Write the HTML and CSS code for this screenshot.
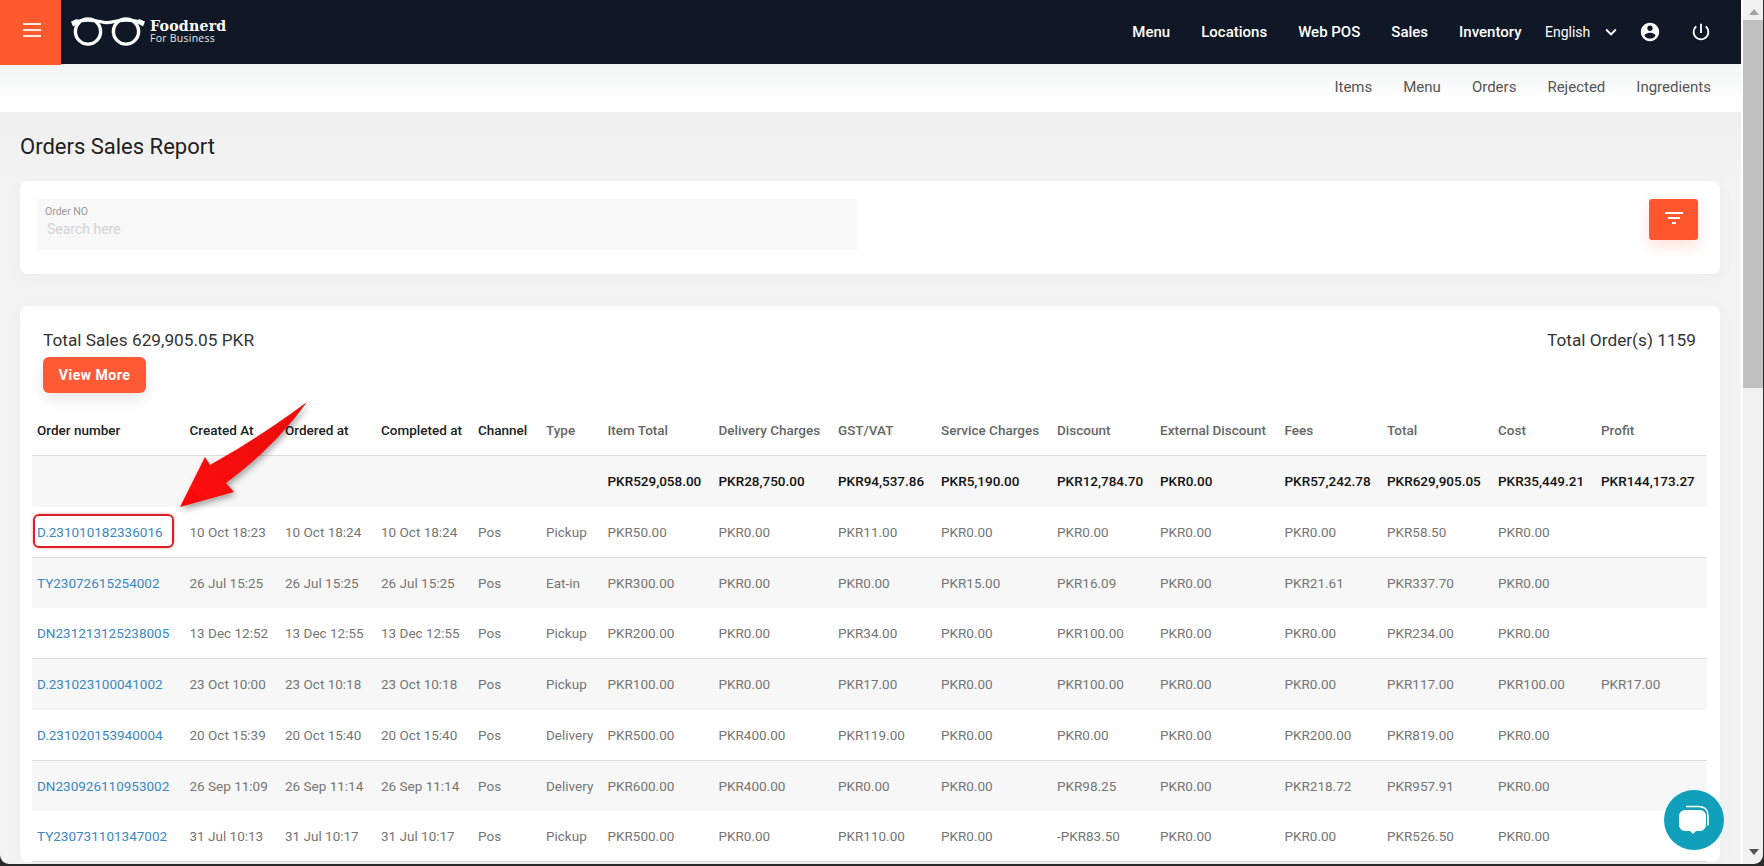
FILE: index.html
```html
<!DOCTYPE html>
<html lang="en">
<head>
<meta charset="utf-8">
<title>Orders Sales Report</title>
<link rel="stylesheet" href="styles.css">
</head>
<body>
<div class="window">
  <div class="page">
    <header class="topbar">
      <button class="burger" aria-label="Menu"><span></span><span></span><span></span></button>
      <div class="logo">
        <svg class="glasses" viewBox="0 0 76 30" width="76" height="30">
          <g fill="none" stroke="#fff" stroke-width="3.4">
            <circle cx="18" cy="15.5" r="12.6"/>
            <circle cx="56" cy="15.5" r="12.6"/>
            <path d="M5 5.8q13-3.4 26 0q6 1.6 12 0q13-3.4 27 0" stroke-width="3.2"/>
          </g>
          <path fill="#fff" d="M1 5.5l6-2.5 2 4-6 3.5zM75 5.5l-6-2.5-2 4 6 3.5z"/>
        </svg>
        <div class="brand">
          <div class="brand-name">Foodnerd</div>
          <div class="brand-sub">For Business</div>
        </div>
      </div>
      <nav class="mainnav">
        <a>Menu</a><a>Locations</a><a>Web POS</a><a>Sales</a><a>Inventory</a>
      </nav>
      <div class="lang">English
        <svg viewBox="0 0 24 24" width="22" height="22"><path fill="#fff" d="M16.59 8.59L12 13.17 7.41 8.59 6 10l6 6 6-6z"/></svg>
      </div>
      <svg class="icon-user" viewBox="0 0 24 24" width="22" height="22"><path fill="#fff" d="M12 2C6.48 2 2 6.48 2 12s4.48 10 10 10 10-4.48 10-10S17.52 2 12 2zm0 3c1.66 0 3 1.34 3 3s-1.34 3-3 3-3-1.34-3-3 1.34-3 3-3zm0 14.2c-2.5 0-4.71-1.28-6-3.22.03-1.99 4-3.08 6-3.08 1.99 0 5.97 1.09 6 3.08-1.29 1.94-3.5 3.22-6 3.22z"/></svg>
      <svg class="icon-power" viewBox="0 0 24 24" width="22" height="22"><path fill="#fff" d="M13 3h-2v10h2V3zm4.83 2.17l-1.42 1.42C17.99 7.86 19 9.81 19 12c0 3.87-3.13 7-7 7s-7-3.13-7-7c0-2.19 1.01-4.14 2.58-5.42L6.17 5.17C4.23 6.82 3 9.26 3 12c0 4.97 4.03 9 9 9s9-4.03 9-9c0-2.74-1.23-5.18-3.17-6.83z"/></svg>
    </header>
    <nav class="subnav">
      <a>Items</a><a>Menu</a><a>Orders</a><a>Rejected</a><a>Ingredients</a>
    </nav>
    <main class="content">
      <h1 class="title">Orders Sales Report</h1>
      <section class="card filter-card">
        <div class="search">
          <label class="search-label">Order NO</label>
          <div class="search-input">Search here</div>
        </div>
        <button class="filter-btn" aria-label="Filter"><svg viewBox="0 0 24 24" width="24" height="24"><path fill="#fff" d="M10 18h4v-2h-4v2zM3 6v2h18V6H3zm3 7h12v-2H6v2z"/></svg></button>
      </section>
      <section class="card table-card">
        <div class="summary">
          <div>
            <div class="summary-text">Total Sales 629,905.05 PKR</div>
            <button class="view-more">View More</button>
          </div>
          <div class="summary-text">Total Order(s) 1159</div>
        </div>
        <table class="orders">
          <colgroup>
            <col class="c1"><col class="c2"><col class="c3"><col class="c4"><col class="c5"><col class="c6"><col class="c7"><col class="c8"><col class="c9"><col class="c10"><col class="c11"><col class="c12"><col class="c13"><col class="c14"><col class="c15"><col class="c16">
          </colgroup>
          <thead>
            <tr>
              <th class="dark">Order number</th><th class="dark">Created At</th><th class="dark">Ordered at</th><th class="dark">Completed at</th><th class="dark">Channel</th><th>Type</th><th>Item Total</th><th>Delivery Charges</th><th>GST/VAT</th><th>Service Charges</th><th>Discount</th><th>External Discount</th><th>Fees</th><th>Total</th><th>Cost</th><th>Profit</th>
            </tr>
          </thead>
          <tbody>
            <tr class="totals">
              <td></td><td></td><td></td><td></td><td></td><td></td><td>PKR529,058.00</td><td>PKR28,750.00</td><td>PKR94,537.86</td><td>PKR5,190.00</td><td>PKR12,784.70</td><td>PKR0.00</td><td>PKR57,242.78</td><td>PKR629,905.05</td><td>PKR35,449.21</td><td>PKR144,173.27</td>
            </tr>
            <tr class="light">
              <td><a class="order-link">D.231010182336016</a></td><td>10 Oct 18:23</td><td>10 Oct 18:24</td><td>10 Oct 18:24</td><td>Pos</td><td>Pickup</td><td>PKR50.00</td><td>PKR0.00</td><td>PKR11.00</td><td>PKR0.00</td><td>PKR0.00</td><td>PKR0.00</td><td>PKR0.00</td><td>PKR58.50</td><td>PKR0.00</td><td></td>
            </tr>
            <tr class="shade">
              <td><a class="order-link">TY23072615254002</a></td><td>26 Jul 15:25</td><td>26 Jul 15:25</td><td>26 Jul 15:25</td><td>Pos</td><td>Eat-in</td><td>PKR300.00</td><td>PKR0.00</td><td>PKR0.00</td><td>PKR15.00</td><td>PKR16.09</td><td>PKR0.00</td><td>PKR21.61</td><td>PKR337.70</td><td>PKR0.00</td><td></td>
            </tr>
            <tr class="light">
              <td><a class="order-link">DN231213125238005</a></td><td>13 Dec 12:52</td><td>13 Dec 12:55</td><td>13 Dec 12:55</td><td>Pos</td><td>Pickup</td><td>PKR200.00</td><td>PKR0.00</td><td>PKR34.00</td><td>PKR0.00</td><td>PKR100.00</td><td>PKR0.00</td><td>PKR0.00</td><td>PKR234.00</td><td>PKR0.00</td><td></td>
            </tr>
            <tr class="shade">
              <td><a class="order-link">D.231023100041002</a></td><td>23 Oct 10:00</td><td>23 Oct 10:18</td><td>23 Oct 10:18</td><td>Pos</td><td>Pickup</td><td>PKR100.00</td><td>PKR0.00</td><td>PKR17.00</td><td>PKR0.00</td><td>PKR100.00</td><td>PKR0.00</td><td>PKR0.00</td><td>PKR117.00</td><td>PKR100.00</td><td>PKR17.00</td>
            </tr>
            <tr class="light">
              <td><a class="order-link">D.231020153940004</a></td><td>20 Oct 15:39</td><td>20 Oct 15:40</td><td>20 Oct 15:40</td><td>Pos</td><td>Delivery</td><td>PKR500.00</td><td>PKR400.00</td><td>PKR119.00</td><td>PKR0.00</td><td>PKR0.00</td><td>PKR0.00</td><td>PKR200.00</td><td>PKR819.00</td><td>PKR0.00</td><td></td>
            </tr>
            <tr class="shade">
              <td><a class="order-link">DN230926110953002</a></td><td>26 Sep 11:09</td><td>26 Sep 11:14</td><td>26 Sep 11:14</td><td>Pos</td><td>Delivery</td><td>PKR600.00</td><td>PKR400.00</td><td>PKR0.00</td><td>PKR0.00</td><td>PKR98.25</td><td>PKR0.00</td><td>PKR218.72</td><td>PKR957.91</td><td>PKR0.00</td><td></td>
            </tr>
            <tr class="light">
              <td><a class="order-link">TY230731101347002</a></td><td>31 Jul 10:13</td><td>31 Jul 10:17</td><td>31 Jul 10:17</td><td>Pos</td><td>Pickup</td><td>PKR500.00</td><td>PKR0.00</td><td>PKR110.00</td><td>PKR0.00</td><td>-PKR83.50</td><td>PKR0.00</td><td>PKR0.00</td><td>PKR526.50</td><td>PKR0.00</td><td></td>
            </tr>
          </tbody>
        </table>
      </section>
    </main>
  </div>
  <aside class="scrollbar">
    <span class="arrow-up"></span>
    <div class="thumb"></div>
    <span class="arrow-down"></span>
  </aside>
  <div class="ring"></div>
  <svg class="pointer" viewBox="0 0 140 120" width="140" height="120">
    <defs>
      <linearGradient id="redfill" x1="1" y1="0" x2="0" y2="1">
        <stop offset="0" stop-color="#e80d0d"/>
        <stop offset="1" stop-color="#ff0606"/>
      </linearGradient>
      <filter id="soft" x="-20%" y="-20%" width="150%" height="150%"><feDropShadow dx="2" dy="3" stdDeviation="3" flood-color="#000" flood-opacity=".35"/></filter>
    </defs>
    <path fill="url(#redfill)" filter="url(#soft)" d="M5 110 L30 60 L35 68 Q85 40 132 5 Q100 50 51 86 L59 95 Z"/>
  </svg>
  <button class="chat" aria-label="Chat">
    <svg viewBox="0 0 36 36" width="36" height="36">
      <path fill="none" stroke="#fff" stroke-width="1.6" d="M10 4.5h12c6 0 10 3 10 9v10"/>
      <path fill="#fff" d="M9 8h15a6 6 0 0 1 6 6v9a6 6 0 0 1-6 6h-4l-3 3-3-3H9a6 6 0 0 1-6-6v-9a6 6 0 0 1 6-6z"/>
    </svg>
  </button>
  <div class="frame"></div>
</div>
</body>
</html>
```
FILE: styles.css
```css
* { box-sizing: border-box; }
html, body { margin: 0; height: 100%; overflow: hidden; }
body { font-family: Roboto, "Liberation Sans", sans-serif; background: #f1f1f1; color: #212121; }
.window { position: relative; display: flex; width: 1764px; height: 866px; overflow: hidden; }
.page { width: 1741px; flex: none; height: 866px; overflow: hidden; background: #f2f2f3; }
.topbar { display: flex; align-items: center; height: 64px; background: #101727; color: #fff; }
.burger { display: flex; flex-direction: column; justify-content: center; gap: 4px; width: 61px; height: 65px; margin-bottom: -1px; padding: 0 0 6px 23px; background: #ff5a2e; border: 0; align-self: flex-start; }
.burger span { display: block; width: 18px; height: 2px; background: #fde9e2; }
.logo { display: flex; align-items: center; margin-left: 9px; margin-bottom: 2px; }
.glasses { flex: none; }
.brand { margin-left: 4px; line-height: 1; }
.brand-name { font: 700 14.2px/14px "DejaVu Serif", serif; letter-spacing: .2px; }
.brand-sub { font: 400 10.5px/11px "Open Sans", sans-serif; color: #e8e8ea; letter-spacing: .25px; }
.mainnav { display: flex; gap: 31px; margin-left: auto; font-size: 15px; font-weight: 500; }
.lang { display: flex; align-items: center; gap: 10px; margin-left: 23.5px; font-size: 14px; width: 77px; }
.lang svg { flex: none; }
.icon-user { margin-left: 17px; }
.icon-power { margin-left: 29px; margin-right: 29px; }
.subnav { display: flex; justify-content: flex-end; align-items: center; gap: 31px; height: 48px; padding: 0 30px 2px 0; background: linear-gradient(#f3f4f4, #fff 75%); font-size: 15px; color: #555; }
.content { padding: 0 21px 0 20px; background: linear-gradient(#efefef, #f3f3f3 70px); }
.title { margin: 0; height: 69px; font-size: 22px; font-weight: 400; line-height: 70px; color: #212121; }
.card { background: #fff; border-radius: 8px; box-shadow: 0 4px 20px rgba(0,0,0,.03); }
.filter-card { display: flex; justify-content: space-between; height: 93px; padding: 18px 22px 0 17px; }
.search { width: 820px; height: 51px; background: #f8f8f8; padding: 7px 8px; }
.search-label { display: block; font-size: 10.5px; line-height: 12px; color: #999; }
.search-input { margin-top: 2px; padding-left: 2px; font-size: 14px; line-height: 18px; color: #d3d3d3; }
.filter-btn { display: flex; align-items: center; justify-content: center; width: 49px; height: 41px; padding: 0 0 4px; border: 0; border-radius: 3px; background: #ff5630; box-shadow: 0 6px 14px rgba(255,86,48,.18); }
.table-card { margin-top: 32px; padding: 23px 13px 0 12px; }
.summary { display: flex; justify-content: space-between; padding: 0 11px; height: 76px; }
.summary-text { font-size: 17.25px; line-height: 23px; color: #333; }
.view-more { display: block; width: 103px; height: 36px; margin-top: 5px; padding: 0; border: 0; border-radius: 6px; background: #ff5a36; color: #fff; font: 700 14px Roboto, sans-serif; letter-spacing: .5px; box-shadow: 0 6px 14px rgba(0,0,0,.1); }
.orders { width: 1675px; border-collapse: separate; border-spacing: 0; table-layout: fixed; font-size: 13.5px; }
.c1 { width: 152.5px; } .c2 { width: 95.5px; } .c3 { width: 96px; } .c4 { width: 97px; } .c5 { width: 68px; } .c6 { width: 61.5px; } .c7 { width: 111px; } .c8 { width: 119.5px; } .c9 { width: 103px; } .c10 { width: 116px; } .c11 { width: 103px; } .c12 { width: 124.5px; } .c13 { width: 102.5px; } .c14 { width: 111px; } .c15 { width: 103px; } .c16 { width: 111px; }
.orders th, .orders td { padding: 0 0 0 5px; text-align: left; white-space: nowrap; height: 50.75px; }
.orders th { font-weight: 500; color: #666; border-bottom: 1px solid #ddd; height: 51px; }
.orders th.dark { color: #212121; }
.orders td { color: #757575; }
.totals td { background: #f7f7f7; color: #111; font-weight: 500; }
.shade td { background: #f7f7f7; }
.light td { border-bottom: 1px solid #ddd; }
.order-link { color: #3a87c4; }
.scrollbar { display: flex; flex-direction: column; align-items: center; width: 23px; flex: none; background: #f1f1f1; border-left: 2px solid #fff; position: relative; }
.arrow-up { width: 0; height: 0; margin-top: 9px; border: 5px solid transparent; border-top: 0; border-bottom: 6px solid #a3a3a3; }
.thumb { width: 100%; height: 368px; margin-top: 5px; background: #c1c1c1; }
.arrow-down { position: absolute; top: 849px; width: 0; height: 0; border: 5px solid transparent; border-bottom: 0; border-top: 6px solid #505050; }
.ring { position: absolute; left: 33px; top: 514px; width: 141px; height: 34px; border: 2px solid #d81f26; border-radius: 6px; box-shadow: 0 0 3px rgba(216,31,38,.45); }
.pointer { position: absolute; left: 175px; top: 397px; }
.chat { position: absolute; left: 1664px; top: 790px; display: flex; align-items: center; justify-content: center; width: 60px; height: 60px; padding: 0; border: 0; border-radius: 50%; background: #10a0bc; }
.frame { position: absolute; left: 0; top: -20px; right: 1px; bottom: 2px; border-radius: 0 0 9px 9px; box-shadow: 0 0 0 6px #2b2b2b; pointer-events: none; }
```
